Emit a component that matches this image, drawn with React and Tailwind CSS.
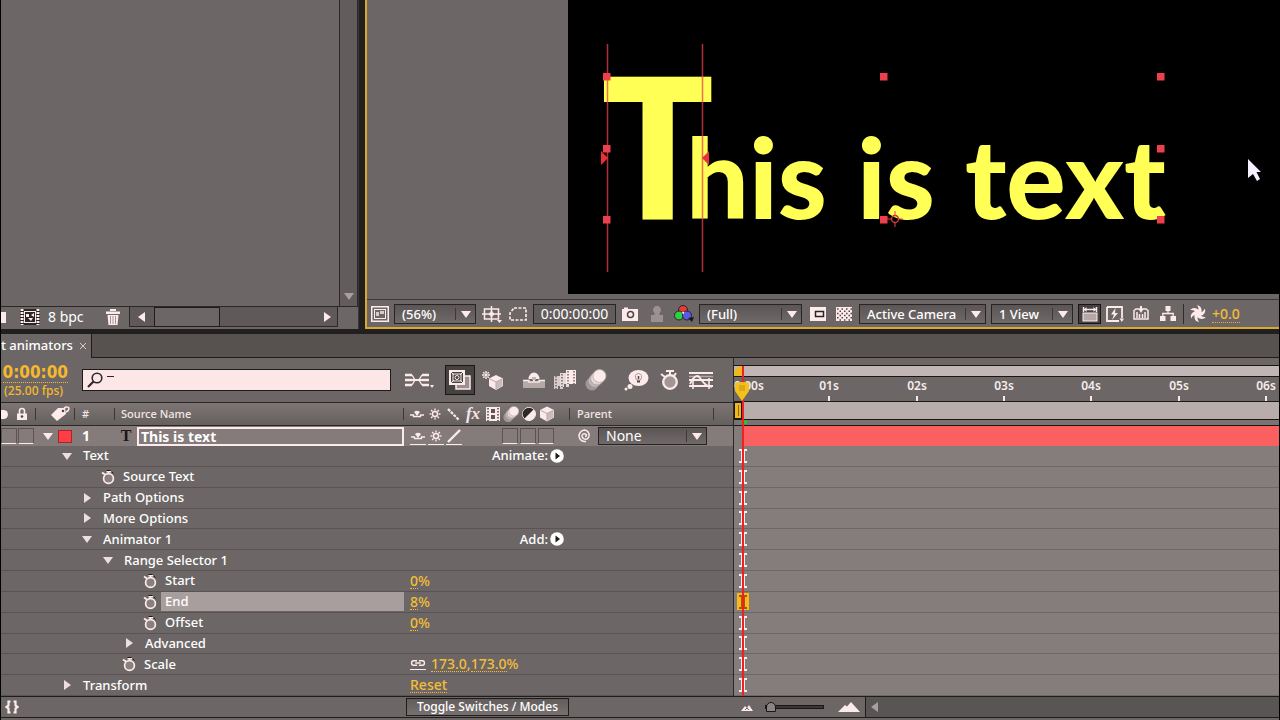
import React from "react";

function Tri({ dir = "down", className = "" }) {
  const pts = { down: "0,2 10,2 5,9", right: "2,0 9,5 2,10", left: "8,0 1,5 8,10" }[dir];
  return (
    <svg width="10" height="10" viewBox="0 0 10 10" className={"shrink-0 " + className} aria-hidden="true">
      <polygon points={pts} fill="currentColor" />
    </svg>
  );
}

function Icon({ w = 22, h = 22, children, className = "" }) {
  return (
    <svg width={w} height={h} viewBox={`0 0 ${w} ${h}`} fill="none" stroke="none" className={"shrink-0 " + className} aria-hidden="true">
      {children}
    </svg>
  );
}

function IconButton({ label, children, className = "" }) {
  return (
    <button type="button" aria-label={label} className={"flex shrink-0 items-center justify-center text-[#fdeaea] " + className}>
      {children}
    </button>
  );
}

function Select({ label, value, className = "", textClass = "" }) {
  return (
    <div className={"relative flex shrink-0 items-center border border-[#272423] bg-linear-to-b from-[#5b5655] to-[#6f6a69] " + className}>
      <select aria-label={label} defaultValue={value} className={"h-full w-full appearance-none bg-transparent outline-none " + textClass}>
        <option>{value}</option>
      </select>
      <span className="pointer-events-none absolute right-0 flex h-3 w-5 items-center justify-center border-l border-[#3d3938]">
        <Tri className="text-[#fdeaea]" />
      </span>
    </div>
  );
}

function Cube({ x = 0, y = 0 }) {
  return (
    <g transform={`translate(${x} ${y})`}>
      <path d="M7 0 L14 3.5 V11 L7 15 L0 11 V3.5Z" fill="#fdeaea" />
      <path d="M7 7 L13.5 3.8 V10.8 L7 14.4Z" fill="#c9bcbb" />
      <path d="M.5 3.8 L7 7 L13.5 3.8 M7 7 V14.5" stroke="#b5a9a8" strokeWidth="1" />
    </g>
  );
}

function Sun({ cx, cy, r = 2.5, filled = false }) {
  const rays = [0, 45, 90, 135, 180, 225, 270, 315];
  return (
    <g stroke="#fdeaea" strokeWidth="1.4">
      <circle cx={cx} cy={cy} r={r} fill={filled ? "#fdeaea" : "none"} />
      {rays.map((a) => (
        <line key={a} x1={cx} y1={cy - r - 1} x2={cx} y2={cy - r - 3} transform={`rotate(${a} ${cx} ${cy})`} />
      ))}
    </g>
  );
}

function Blur({ s = 1 }) {
  return (
    <g transform={`scale(${s})`}>
      <circle cx="7" cy="15" r="6.5" fill="#a39796" />
      <circle cx="10" cy="11.500" r="6.500" fill="#c3b7b6" />
      <circle cx="12" cy="9.500" r="6.500" fill="#e5d6d6" stroke="#a89c9b" strokeWidth=".8" />
      <circle cx="14.500" cy="7" r="6.500" fill="#fdeaea" stroke="#b5a9a8" strokeWidth=".8" />
    </g>
  );
}

function Shy() {
  return (
    <Icon w={16} h={16}>
      <path d="M1 9 H4.500 V10.500 H11.500 V9 H15" stroke="#fdeaea" strokeWidth="1.300" />
      <path d="M5 6 Q8 3.500 11 6 L8 10Z" fill="#fdeaea" />
    </Icon>
  );
}

function Stopwatch() {
  return (
    <Icon w={16} h={16}>
      <circle cx="8.500" cy="9.500" r="4.900" fill="#8a807f" stroke="#fdeaea" strokeWidth="1.700" />
      <path d="M8.500 4.500 V2 M6.500 2.800 H11" stroke="#fdeaea" strokeWidth="1.600" />
      <path d="M2 3.500 L5 5.500" stroke="#fdeaea" strokeWidth="2" />
      <path d="M6.500 1.500 H10.500 M12 3 L13.500 4.500" stroke="#1d1a1a" strokeWidth="1" />
    </Icon>
  );
}

function ProjectPanel() {
  return (
    <section aria-label="Project" className="flex w-[358px] shrink-0 flex-col border-r border-[#3b3736] bg-[#6c6766]">
      <div className="flex flex-1">
        <div className="flex-1 border-b border-[#2b2827]" />
        <div className="flex w-[19px] flex-col justify-end border-x border-b border-[#2b2827] bg-[#625d5c]">
          <button type="button" aria-label="Scroll down" className="flex h-5 items-center justify-center text-[#a99f9e]">
            <Tri />
          </button>
        </div>
      </div>
      <div className="mb-0.5 flex h-5 items-center text-white">
        <span className="h-[11px] w-[5px] bg-[#fdeaea]" />
        <IconButton label="New composition" className="ml-3.5">
          <Icon w={20} h={16}>
            <rect x="0" y="0" width="20" height="16" fill="#2a2726" />
            <path d="M2 0 V16 M18 0 V16" stroke="#fdeaea" strokeWidth="3" strokeDasharray="2 1" />
            <rect x="4.500" y="2.500" width="11" height="11" stroke="#fdeaea" />
            <path d="M6 5 H9 V8 H6Z M11 6 L14 4 V8Z M8 9 H13 L11 12Z" fill="#fdeaea" />
          </Icon>
        </IconButton>
        <button type="button" className="ml-2 text-[14px] leading-[18px]">8 bpc</button>
        <IconButton label="Delete" className="ml-auto mr-2">
          <Icon w={16} h={18}>
            <path d="M1 3.500 H15 V6 H1Z M5 3 V1 H11 V3Z" fill="#fdeaea" />
            <path d="M2.500 7 H13.500 L12.500 17 H3.500Z" fill="#fdeaea" />
            <path d="M5.500 8 V16 M8 8 V16 M10.500 8 V16" stroke="#a39796" />
          </Icon>
        </IconButton>
        <div className="mr-5 flex h-5 w-[209px] items-center border-x border-b border-[#2b2827] bg-[#5f5a59]">
          <button type="button" aria-label="Scroll left" className="flex w-6 justify-center text-[#fdeaea]">
            <Tri dir="left" />
          </button>
          <div className="h-5 w-[66px] border border-[#1f1c1c] bg-[#6c6766]" />
          <button type="button" aria-label="Scroll right" className="ml-auto flex w-5 justify-center text-[#fdeaea]">
            <Tri dir="right" />
          </button>
        </div>
      </div>
    </section>
  );
}

function Viewer() {
  const handles = [
    [39, 77], [316, 77], [593, 77],
    [39, 149], [593, 149],
    [39, 220], [316, 220], [593, 220],
  ];
  return (
    <section aria-label="Composition viewer" className="flex min-w-0 flex-1 flex-col border-2 border-r-0 border-t-0 border-[#d9a82c] bg-[#6c6766]">
      <div className="flex flex-1 pl-[201px]">
        <div className="relative flex-1 overflow-hidden bg-black">
          <span className="absolute left-[32px] top-[42px] font-['Open_Sans','Noto_Sans',sans-serif] text-[199px] leading-[200px] font-bold text-[#ffff55]">T</span>
          <div className="absolute left-[118px] top-[106px] flex gap-[30px] font-['Lato',sans-serif] text-[111px] leading-[140px] font-black text-[#ffff55]">
            <span>his</span>
            <span>is</span>
            <span>text</span>
          </div>
          <svg className="absolute left-0 top-0" width="700" height="293" viewBox="0 0 700 293" aria-hidden="true">
            <path d="M39.500 44 V272 M134.500 44 V272" stroke="#e8414b" strokeOpacity=".75" strokeWidth="1.500" />
            {handles.map(([x, y]) => (
              <rect key={x + "-" + y} x={x - 4} y={y - 4} width="7.500" height="7.500" fill="#ee404c" />
            ))}
            <path d="M33 151 L40 158 L33 165Z M141 151 L134 158 L141 165Z" fill="#e8303c" />
            <circle cx="327" cy="219" r="3.500" stroke="#c23038" strokeWidth="1.500" fill="none" />
            <path d="M319 219 H324 M330 219 H335 M327 211 V216 M327 222 V227" stroke="#e8414b" />
            <path d="M680 159 V178 L685 174 L689 181 L692 179 L688.500 172 H693Z" fill="#f4f0ff" />
          </svg>
        </div>
      </div>
      <div className="mt-[5px] flex h-7 items-center gap-[5px] border-t border-[#3b3736] pl-1 text-[13px] font-medium text-white">
        <IconButton label="Always preview this view" className="w-[18px]">
          <Icon w={18} h={16}>
            <rect x=".75" y=".75" width="16.500" height="14.500" stroke="#fdeaea" strokeWidth="1.500" />
            <rect x="3.500" y="3.500" width="11" height="9" stroke="#fdeaea" />
            <path d="M5 6 H8 V10 H5Z M9 5 H13 V8 H9Z" fill="#d8cbca" />
          </Icon>
        </IconButton>
        <Select label="Magnification" value="(56%)" className="h-5 w-[82px]" textClass="pl-[7px] leading-[18px]" />
        <IconButton label="Grid and guides" className="w-[22px]">
          <Icon w={20} h={18}>
            <path d="M2.500 4 H16.500 V14 H2.500Z M0 9 H19 M9.500 1 V17" stroke="#fdeaea" strokeWidth="1.500" />
            <path d="M7 9 H12 M9.500 6.500 V11.500" stroke="#fdeaea" strokeWidth="2.500" />
            <path d="M15 15 H20 L17.500 18Z" fill="#fdeaea" />
          </Icon>
        </IconButton>
        <IconButton label="Mask visibility" className="w-5">
          <Icon w={18} h={14}>
            <path d="M5 1 H17 V13 H1 V6Z" stroke="#fdeaea" strokeWidth="1.700" strokeDasharray="3 1.500" />
          </Icon>
        </IconButton>
        <button type="button" className="h-5 w-[83px] shrink-0 border border-[#272423] bg-[#625d5c] text-[14px] leading-[18px] font-normal">0:00:00:00</button>
        <IconButton label="Take snapshot" className="w-[18px]">
          <Icon w={18} h={14}>
            <path d="M1 2 H3 V0.500 H7 V2 H17 V14 H1Z" fill="#fdeaea" />
            <circle cx="9.500" cy="7.500" r="3" fill="#fdeaea" stroke="#4b4645" strokeWidth="1.500" />
          </Icon>
        </IconButton>
        <IconButton label="Show snapshot" className="w-[25px]">
          <Icon w={14} h={16}>
            <path d="M1 16 V9 H4.500 V7 A4 4 0 1 1 9.500 7 V9 H13 V16Z" fill="#9b9190" />
          </Icon>
        </IconButton>
        <IconButton label="Show channel" className="w-5">
          <Icon w={20} h={17}>
            <circle cx="9" cy="5" r="4.500" fill="#e83a3a" stroke="#272423" />
            <circle cx="5" cy="10.500" r="4.500" fill="#2fd045" stroke="#272423" />
            <circle cx="13" cy="10.500" r="4.500" fill="#5a5aea" stroke="#272423" />
            <path d="M8 7 H10.500 L9.300 9.500Z" fill="#fff" />
            <path d="M14 13 L20 12 L18 17Z" fill="#1a1818" />
          </Icon>
        </IconButton>
        <Select label="Resolution" value="(Full)" className="h-5 w-[103px]" textClass="pl-[7px] leading-[18px]" />
        <IconButton label="Region of interest" className="w-[22px]">
          <Icon w={16} h={14}>
            <rect width="16" height="14" fill="#fdeaea" />
            <rect x="5.500" y="4.500" width="8" height="5" stroke="#272423" strokeWidth="1.500" />
          </Icon>
        </IconButton>
        <IconButton label="Transparency grid" className="w-5">
          <Icon w={16} h={14}>
            <rect width="16" height="14" fill="#fdeaea" />
            {[0, 1, 2, 3, 4, 5].map((r) => (
              <path key={r} d={`M${r % 2 ? 3.500 : 1} ${2 + r * 2.2} H16`} stroke="#4b4645" strokeWidth="1.500" strokeDasharray="1.500 3" />
            ))}
          </Icon>
        </IconButton>
        <Select label="3D view" value="Active Camera" className="h-5 w-[127px]" textClass="pl-[7px] leading-[18px]" />
        <Select label="View layout" value="1 View" className="h-5 w-[82px]" textClass="pl-[7px] leading-[18px]" />
        <IconButton label="Pixel aspect ratio" className="h-5 w-[23px] border border-[#171515] bg-[#454140]">
          <Icon w={16} h={16}>
            <path d="M1 3.500 H15 M1.500 1 V6 M14.500 1 V6" stroke="#fdeaea" strokeWidth="1.500" />
            <path d="M4.500 1 V6 L2 3.500Z M11.500 1 V6 L14 3.500Z" fill="#fdeaea" />
            <rect x="1" y="7" width="14" height="8" fill="#b5a9a8" stroke="#fdeaea" />
          </Icon>
        </IconButton>
        <IconButton label="Fast previews" className="w-[18px]">
          <Icon w={18} h={16}>
            <path d="M1 1 H16 V12 M1 1 V15 H13" stroke="#fdeaea" strokeWidth="1.800" />
            <path d="M9.500 2 L5 8.500 H8 L6 14 L12 7 H9Z" fill="#fdeaea" />
            <path d="M13.500 12.500 H18 L15.800 16Z" fill="#fdeaea" />
          </Icon>
        </IconButton>
        <IconButton label="Timeline" className="w-[24px]">
          <Icon w={16} h={15}>
            <path d="M1 13 V4.500 L3 3 H13 L15 4.500 V13Z" stroke="#fdeaea" strokeWidth="1.500" />
            <path d="M5.500 3 H10.500 L8 7Z" fill="#fdeaea" />
            <path d="M4 6 V12 M6.500 8 V12 M9.500 8 V12 M12 6 V12" stroke="#fdeaea" strokeWidth="1.500" />
            <path d="M8 0 V4" stroke="#fdeaea" strokeWidth="2" />
          </Icon>
        </IconButton>
        <IconButton label="Flowchart" className="w-[20px]">
          <Icon w={16} h={15}>
            <path d="M5.500 0 H10.500 V5 H5.500Z M0 10 H5.500 V15 H0Z M10.500 10 H16 V15 H10.500Z" fill="#fdeaea" />
            <path d="M8 5 V7.500 M2.800 10 V7.500 H13.200 V10" stroke="#fdeaea" strokeWidth="1.300" />
          </Icon>
        </IconButton>
        <div className="h-5 w-px bg-[#2f2c2b]" />
        <IconButton label="Reset exposure" className="w-[18px]">
          <Icon w={18} h={17}>
            {[0, 60, 120, 180, 240, 300].map((a) => (
              <path key={a} d="M8 9 Q11 4 8 0 Q13.500 1 12.500 8" fill="#fdeaea" transform={`rotate(${a} 9 8.500)`} />
            ))}
          </Icon>
        </IconButton>
        <button type="button" className="mt-0.5 border-b border-dotted border-[#e9b02f] text-[14px] leading-4 text-[#f4bd35]">+0.0</button>
      </div>
    </section>
  );
}

function Toolbar() {
  return (
    <div className="flex h-11 items-center text-[#fdeaea]">
      <div className="flex w-[67px] shrink-0 flex-col items-end text-[#f6b92c]">
        <button type="button" className="border-b border-dotted border-[#f6b92c] font-['DejaVu_Sans_Condensed','DejaVu_Sans',sans-serif] text-[17px] leading-[20px] font-bold whitespace-nowrap">0:00:00</button>
        <span className="pr-[5px] text-[12px] leading-[16px] font-medium">(25.00 fps)</span>
      </div>
      <label className="ml-3.5 flex h-[22px] w-[309px] shrink-0 items-center border border-[#1d1a1a] bg-[#fde6e6] pl-1">
        <Icon w={16} h={16}>
          <circle cx="10" cy="6" r="4.800" stroke="#2e2928" strokeWidth="1.600" />
          <path d="M6.500 9.500 L1 15" stroke="#2e2928" strokeWidth="2.200" />
        </Icon>
        <span className="ml-1 -mt-2 h-px w-2 bg-[#2e2928]" />
        <input aria-label="Search layers" className="w-full min-w-0 bg-transparent text-[13px] text-black outline-none" />
      </label>
      <div className="ml-3 flex items-center">
        <IconButton label="Mini-flowchart" className="w-[32px]">
          <Icon w={30} h={18}>
            <path d="M1 4 H8 M1 9 H8 M1 14 H8 M18 4 H25 M18 9 H25 M18 14 H25" stroke="#fdeaea" strokeWidth="2.500" />
            <path d="M8 4 L11 9 L8 14 M18 4 L15 9 L18 14" stroke="#fdeaea" strokeWidth="1.400" />
            <path d="M8 9 H18" stroke="#fdeaea" strokeWidth="2" />
            <path d="M26 14 H30 L28 17Z" fill="#fdeaea" />
          </Icon>
        </IconButton>
        <IconButton label="Live update" className="ml-2.5 h-[30px] w-[30px] border border-[#1a1717] bg-[#464241]">
          <Icon w={24} h={22}>
            <rect x="8" y="7" width="14" height="13" fill="#9b9190" stroke="#fdeaea" strokeWidth="1.500" />
            <rect x="2" y="2" width="14" height="13" fill="#464241" stroke="#fdeaea" strokeWidth="2" />
            <rect x="5" y="5" width="8" height="7" stroke="#fdeaea" />
            <circle cx="9" cy="8.500" r="2" stroke="#fdeaea" />
            <path d="M3 3 L6 6 M15 3 L12 6 M3 14 L6 11 M15 14 L12 11" stroke="#fdeaea" />
          </Icon>
        </IconButton>
        <IconButton label="Draft 3D" className="w-[33px]">
          <Icon w={24} h={22}>
            <Sun cx={6} cy={6} r={1} filled />
            <Cube x={9} y={6} />
          </Icon>
        </IconButton>
        <IconButton label="Hide shy layers" className="ml-2.5 w-[31px]">
          <Icon w={24} h={20}>
            <path d="M1 10 H7 V12 H17 V10 H23 V18 H1Z" fill="#b5a9a8" />
            <path d="M1 10.500 H7 V12 H17 V10.500 H23" stroke="#fdeaea" strokeWidth="1.500" />
            <path d="M6.500 9 A5.500 6.500 0 0 1 17.500 9 H14 L12 12 L10 9Z" fill="#fdeaea" />
            <path d="M11 7 V10 M13 7 V10" stroke="#8a807f" />
          </Icon>
        </IconButton>
        <IconButton label="Frame blending" className="w-[31px]">
          <Icon w={24} h={22}>
            <rect x="1" y="7" width="9" height="13" fill="#d8cbca" />
            <rect x="7" y="4" width="9" height="14" fill="#e9dada" />
            <rect x="13" y="1" width="10" height="14" fill="#fdeaea" />
            <path d="M3 7 V20 M9 5 V18 M15 2 V15 M21 2 V15" stroke="#6c6766" strokeWidth="1.500" strokeDasharray="1.500 1.500" />
            <path d="M6 17 V20 M12 15 V18" stroke="#6c6766" strokeWidth="2" />
          </Icon>
        </IconButton>
        <IconButton label="Motion blur" className="w-[31px]">
          <Icon w={22} h={22}><Blur /></Icon>
        </IconButton>
        <IconButton label="Brainstorm" className="ml-2.5 w-[32px]">
          <Icon w={26} h={22}>
            <ellipse cx="14.500" cy="9" rx="10" ry="8" fill="#fdeaea" />
            <path d="M12.500 11 Q9.500 5 14.500 4.500 Q19.500 5 16.500 11Z" stroke="#a39796" strokeWidth="1" />
            <path d="M13 12.500 H16" stroke="#4b4645" strokeWidth="2" />
            <path d="M14.500 7 V10" stroke="#4b4645" strokeWidth="1.500" />
            <circle cx="6" cy="17.500" r="2.500" fill="#fdeaea" />
            <circle cx="2" cy="20" r="1.500" fill="#fdeaea" />
          </Icon>
        </IconButton>
        <IconButton label="Auto-keyframe" className="w-[31px]">
          <Icon w={20} h={22}>
            <circle cx="11" cy="13" r="6.800" fill="#a39796" stroke="#fdeaea" strokeWidth="2.300" />
            <path d="M11 6 V2 M7 2 H15 M2 5 L6 8 M17 4 L15 7" stroke="#fdeaea" strokeWidth="2" />
          </Icon>
        </IconButton>
        <IconButton label="Graph editor" className="w-[34px]">
          <Icon w={26} h={20}>
            <path d="M1 3 H25 M1 10 H25 M1 16 H25" stroke="#fdeaea" strokeWidth="2" />
            <path d="M1 6.500 H25" stroke="#b5a9a8" strokeWidth="1.500" />
            <path d="M5 8 V19 M21 8 V19" stroke="#fdeaea" strokeWidth="1.600" />
            <path d="M2 14 Q8 2 12 8 T20 16 L24 17" stroke="#fdeaea" strokeWidth="1.800" />
          </Icon>
        </IconButton>
      </div>
    </div>
  );
}

const COLS = "grid grid-cols-[35px_39px_40px_289px_166px_1fr]";

function ColumnHeader() {
  return (
    <div className={COLS + " h-[24px] items-center border-y border-[#2b2827] bg-linear-to-b from-[#7d7675] to-[#655f5e] text-[11px] font-medium text-[#f3e6e6]"}>
      <div className="flex h-3 items-center border-r border-[#3b3736]">
        <span className="h-[9px] w-[7px] rounded-r-full bg-[#fdeaea]" />
        <Icon w={12} h={14} className="ml-2">
          <path d="M3.500 7 V4 A2.500 2.500 0 0 1 8.500 4 V7" stroke="#fdeaea" strokeWidth="1.600" />
          <path d="M1 6.500 H11 V13 H1Z" fill="#fdeaea" />
          <circle cx="6" cy="9.500" r="1.300" fill="#4b4645" />
        </Icon>
      </div>
      <div className="flex h-3 items-center justify-end border-r border-[#3b3736] pr-1">
        <Icon w={20} h={16}>
          <path d="M1 9 L8 2 L15 2 L16 8 L7 15Z" fill="#fdeaea" />
          <path d="M13 4 Q16 -1 19 2 Q19 5 16 6" stroke="#fdeaea" strokeWidth="1.400" />
          <circle cx="13" cy="5" r="1.300" fill="#4b4645" />
        </Icon>
      </div>
      <div className="flex h-3 items-center border-r border-[#3b3736] pl-[7px]">#</div>
      <div className="flex h-3 items-center border-r border-[#3b3736] pl-[6px]">Source Name</div>
      <div className="flex h-3 items-center gap-[2px] border-r border-[#3b3736] pl-[5px]">
        <Shy />
        <Icon w={16} h={16}><Sun cx={8} cy={8} /></Icon>
        <Icon w={16} h={16}><path d="M3 3 L14 14" stroke="#fdeaea" strokeWidth="2.200" strokeDasharray="3 1" /></Icon>
        <span className="w-[20px] text-center font-['Liberation_Serif',serif] text-[17px] leading-3 font-bold italic">fx</span>
        <Icon w={16} h={16}>
          <rect x="1" y="1" width="14" height="14" fill="#fdeaea" />
          <path d="M3 2 V15 M13 2 V15" stroke="#4b4645" strokeWidth="1.500" strokeDasharray="1.500 1.500" />
          <path d="M6 3 H10 V7 H6Z M6 9 H10 V13 H6Z" fill="#5b5655" />
        </Icon>
        <Icon w={16} h={16}><Blur s={0.75} /></Icon>
        <Icon w={16} h={16}>
          <circle cx="8" cy="8" r="6.500" fill="#fdeaea" stroke="#fdeaea" />
          <path d="M12.500 3.500 A6.300 6.300 0 0 0 3.500 12.500Z" fill="#2e2928" />
        </Icon>
        <Icon w={16} h={16}><Cube x={1} y={.5} /></Icon>
      </div>
      <div className="mr-[19px] flex h-3 items-center border-r border-[#3b3736] pl-[7px]">Parent</div>
    </div>
  );
}

function SwitchBox({ children }) {
  return <span className="flex h-[17px] w-[16px] items-center justify-center border-b border-[#fdeaea]">{children}</span>;
}

function EmptyBox() {
  return <span className="h-[16px] w-[16px] border border-b-[#fdeaea] border-l-[#5b5453] border-r-[#5b5453] border-t-[#5b5453]" />;
}

function LayerRow() {
  return (
    <div className={COLS + " h-[20px] items-center bg-[#857b7b] text-[14px] text-white"}>
      <div className="flex gap-px">
        <EmptyBox />
        <EmptyBox />
      </div>
      <div className="flex items-center justify-end gap-[5px] pr-[3px]">
        <Tri className="text-[#fdeaea]" />
        <span className="h-[13px] w-[14px] border border-[#a52528] bg-[#fb3f42]" />
      </div>
      <div className="pl-[7px] leading-5 font-bold">1</div>
      <div className="flex items-center">
        <span className="w-[22px] text-center font-['Liberation_Serif',serif] text-[16px] leading-4 font-bold text-[#1a1717]">T</span>
        <input aria-label="Layer name" defaultValue="This is text" className="h-[19px] min-w-0 flex-1 border-2 border-[#fdeaea] bg-[#857b7b] pl-0.5 text-[14px] leading-4 font-bold text-white outline-none" />
      </div>
      <div className="flex items-center gap-[2px] pl-[6px]">
        <SwitchBox><Shy /></SwitchBox>
        <SwitchBox><Icon w={16} h={16}><Sun cx={8} cy={8} /></Icon></SwitchBox>
        <SwitchBox><Icon w={16} h={16}><path d="M2 14 L14 2" stroke="#fdeaea" strokeWidth="2.400" /></Icon></SwitchBox>
        <span className="w-[36px]" />
        <EmptyBox />
        <EmptyBox />
        <EmptyBox />
      </div>
      <div className="flex items-center pl-[6px]">
        <Icon w={18} h={16}>
          <path d="M9 8.500 A1.500 1.500 0 0 0 10.500 7 A2.500 2.500 0 0 0 6 7.500 A3.500 3.500 0 0 0 13 8 A5 5 0 0 0 8.500 2 A6 6 0 0 0 3 8 A6 6 0 0 0 10 13.500" stroke="#fdeaea" strokeWidth="1.500" />
        </Icon>
        <Select label="Parent" value="None" className="ml-1 h-[18px] w-[109px]" textClass="pl-[7px] leading-4" />
      </div>
    </div>
  );
}

const ROWS = [
  { name: "Text", pad: "pl-[61px]", mark: "down", action: "Animate:" },
  { name: "Source Text", pad: "pl-[99px]", mark: "watch" },
  { name: "Path Options", pad: "pl-[81px]", mark: "right" },
  { name: "More Options", pad: "pl-[81px]", mark: "right" },
  { name: "Animator 1", pad: "pl-[81px]", mark: "down", action: "Add:" },
  { name: "Range Selector 1", pad: "pl-[102px]", mark: "down" },
  { name: "Start", pad: "pl-[141px]", mark: "watch", value: "0" },
  { name: "End", pad: "pl-[141px]", mark: "watch", value: "8", selected: true },
  { name: "Offset", pad: "pl-[141px]", mark: "watch", value: "0" },
  { name: "Advanced", pad: "pl-[123px]", mark: "right" },
  { name: "Scale", pad: "pl-[120px]", mark: "watch", scale: true },
  { name: "Transform", pad: "pl-[61px]", mark: "right", reset: true },
];

function Value({ children }) {
  return <button type="button" className="border-b border-dotted border-[#f6b92c] leading-[15px]">{children}</button>;
}

function PropertyRow({ row }) {
  return (
    <div className="flex items-center border-b border-[#595453] text-[13px] font-medium text-white">
      <div className={"flex w-[403px] shrink-0 items-center " + row.pad}>
        {row.mark === "watch" ? (
          <button type="button" aria-label={"Animate " + row.name}><Stopwatch /></button>
        ) : (
          <button type="button" aria-label={"Toggle " + row.name} className="mr-1.5"><Tri dir={row.mark} className="text-[#eedede]" /></button>
        )}
        <span className={"flex-1 leading-[19px] " + (row.selected ? "ml-[3px] bg-[#a99e9e] pl-1" : row.mark === "watch" ? "pl-[7px]" : "pl-[5px]")}>{row.name}</span>
      </div>
      <div className="flex flex-1 items-center pl-[6px] text-[14px] text-[#f4bd35]">
        {row.value && (<><Value>{row.value}</Value><span className="leading-4">%</span></>)}
        {row.scale && (
          <>
            <Icon w={16} h={12} className="mr-[5px] border-b border-[#fdeaea]">
              <path d="M7 3 H3 Q1 3 1 5.500 Q1 8 3 8 H7 M9 3 H13 Q15 3 15 5.500 Q15 8 13 8 H9 M5 5.500 H11" stroke="#fdeaea" strokeWidth="1.600" />
            </Icon>
            <Value>173.0</Value><span className="leading-4">,</span><Value>173.0</Value><span className="leading-4">%</span>
          </>
        )}
        {row.reset && <Value>Reset</Value>}
        {row.action && (
          <button type="button" className="flex w-[154px] items-center justify-end gap-0.5 text-[13px] leading-[19px] text-white">
            {row.action}
            <Icon w={14} h={14}>
              <circle cx="7" cy="7" r="6.800" fill="#fff" />
              <path d="M5.500 3.500 L10 7 L5.500 10.500Z" fill="#1d1a1a" />
            </Icon>
          </button>
        )}
      </div>
    </div>
  );
}

function Tracks() {
  const marks = [1, 2, 3, 4, 5, 6];
  return (
    <div className="relative flex min-w-0 flex-1 flex-col overflow-hidden border-l border-[#2b2827]">
      <div className="h-[7px]" />
      <div className="flex h-[12px] border-y border-[#1a1717] bg-[#c2b5b5]">
        <span className="w-2 rounded-tl-lg bg-[#efb81c]" />
      </div>
      <div className="relative h-[24px] text-[12px] font-semibold text-[#f7ecec]">
        <span className="absolute left-0 top-0 leading-[18px]">0:00s</span>
        {marks.map((m) => (
          <span key={m} className="absolute bottom-0 flex h-6 w-10 flex-col items-center justify-between" style={{ left: Math.round((m * 524) / 6) - 12 }}>
            <span className="leading-[18px]">{"0" + m + "s"}</span>
            <span className="h-[5px] w-0.5 bg-[#f7ecec]" />
          </span>
        ))}
      </div>
      <div className="flex h-[19px] border-y border-[#1a1717] bg-[#b8adab]">
        <span className="flex w-2 justify-center border border-[#1a1717] bg-[#efb81c] py-0.5">
          <span className="w-px bg-[#8a6508]" />
        </span>
      </div>
      <div className="flex h-[5px] bg-[#7b7372] pl-[9px]"><span className="h-1 w-1 bg-[#2fbf2f]" /></div>
      <div className="h-[21px] border-t border-[#1a1717] bg-[#857b7b] pl-[9px]">
        <div className="h-full bg-[#fb6060]" />
      </div>
      <div className="grid h-[250px] grid-rows-12 bg-[#857c7c]">
        {ROWS.map((row) => (
          <div key={row.name} className="flex items-center border-b border-[#6e6766] pl-[3px]">
            <span className={"flex h-[17px] w-3 items-center justify-center " + (row.selected ? "bg-[#fdb813]" : "")}>
              <Icon w={8} h={14}>
                <path d="M0 1 H8 M0 13 H8" stroke={row.selected ? "#a3560c" : "#fdeaea"} strokeWidth="2" />
                <path d="M4 2 V12" stroke={row.selected ? "#a3560c" : "#fdeaea"} strokeWidth="4" />
              </Icon>
            </span>
          </div>
        ))}
      </div>
      <div className="absolute bottom-0 left-2 top-2 w-0.5 bg-[#ee2226]" />
      <svg className="absolute left-px top-6" width="14" height="19" viewBox="0 0 14 19" aria-hidden="true">
        <path d="M0 1 Q7 -1 14 1 V9 L7 19 L0 9Z" fill="#f4c01e" />
        <path d="M5 3 V9 M7 3 V9 M9 3 V9" stroke="#b98708" strokeWidth=".8" />
      </svg>
    </div>
  );
}

function Footer() {
  return (
    <div className="flex h-[22px] items-center border-y border-[#1f1c1c] text-[#fdeaea]">
      <div className="flex w-[740px] shrink-0 items-center">
        <IconButton label="Expand panes" className="ml-1 w-3.5">
          <Icon w={14} h={14}>
            <path d="M5.500 1.500 H3.500 V5.500 L1.500 7 L3.500 8.500 V12.500 H5.500 M8.500 1.500 H10.500 V5.500 L12.500 7 L10.500 8.500 V12.500 H8.500" stroke="#fdeaea" strokeWidth="2.200" />
          </Icon>
        </IconButton>
        <button type="button" className="ml-[387px] h-[18px] w-[163px] border border-[#1f1c1c] bg-linear-to-b from-[#625d5c] to-[#77706f] text-[12px] leading-4 font-medium text-white">Toggle Switches / Modes</button>
      </div>
      <Icon w={12} h={8}><path d="M0 8 L4 3 L6 5 L8 2 L12 8Z" fill="#fdeaea" /><path d="M4 7 L6 5 L8 7" stroke="#6c6766" /></Icon>
      <input
        type="range"
        aria-label="Timeline zoom"
        min="0"
        max="100"
        defaultValue="0"
        className="ml-3 h-3 w-[59px] appearance-none bg-transparent [&::-webkit-slider-runnable-track]:h-1 [&::-webkit-slider-runnable-track]:border [&::-webkit-slider-runnable-track]:border-[#1a1717] [&::-webkit-slider-runnable-track]:bg-[#3b3736] [&::-webkit-slider-thumb]:-mt-1 [&::-webkit-slider-thumb]:h-2.5 [&::-webkit-slider-thumb]:w-2.5 [&::-webkit-slider-thumb]:appearance-none [&::-webkit-slider-thumb]:rounded-t-full [&::-webkit-slider-thumb]:border [&::-webkit-slider-thumb]:border-[#1a1717] [&::-webkit-slider-thumb]:bg-[#8d8382]"
      />
      <Icon w={22} h={10} className="ml-3.5"><path d="M0 10 L7 3 L9 4.500 L13 0 L22 10Z" fill="#fdeaea" /></Icon>
      <div className="ml-[5px] flex h-full flex-1 items-center border-l border-[#1f1c1c] bg-[#595554] pl-1">
        <button type="button" aria-label="Scroll timeline left" className="text-[#a99f9e]"><Tri dir="left" /></button>
      </div>
    </div>
  );
}

export default function App() {
  return (
    <main className="flex h-screen min-h-[560px] flex-col overflow-hidden border-x border-black bg-[#22201f] font-['Noto_Sans','Open_Sans',sans-serif]">
      <div className="flex min-h-0 flex-1 gap-[6px] pb-[5px]">
        <ProjectPanel />
        <Viewer />
      </div>
      <section aria-label="Timeline" className="bg-[#6c6766]">
        <div className="flex h-6 border-b border-[#1f1c1c] bg-[#575150]">
          <button type="button" className="-mb-px flex w-[91px] shrink-0 items-center justify-between border-r border-[#1f1c1c] bg-[#6c6766] pr-1 text-[13px] font-medium whitespace-nowrap text-white">
            t animators
            <Icon w={8} h={8}><path d="M1 1 L7 7 M7 1 L1 7" stroke="#d8cbca" /></Icon>
          </button>
        </div>
        <div className="flex">
          <div className="flex w-[732px] shrink-0 flex-col">
            <Toolbar />
            <ColumnHeader />
            <LayerRow />
            <div className="grid h-[250px] grid-rows-12">
              {ROWS.map((row) => (
                <PropertyRow key={row.name} row={row} />
              ))}
            </div>
          </div>
          <Tracks />
        </div>
        <Footer />
        <div className="h-0.5" />
      </section>
    </main>
  );
}
